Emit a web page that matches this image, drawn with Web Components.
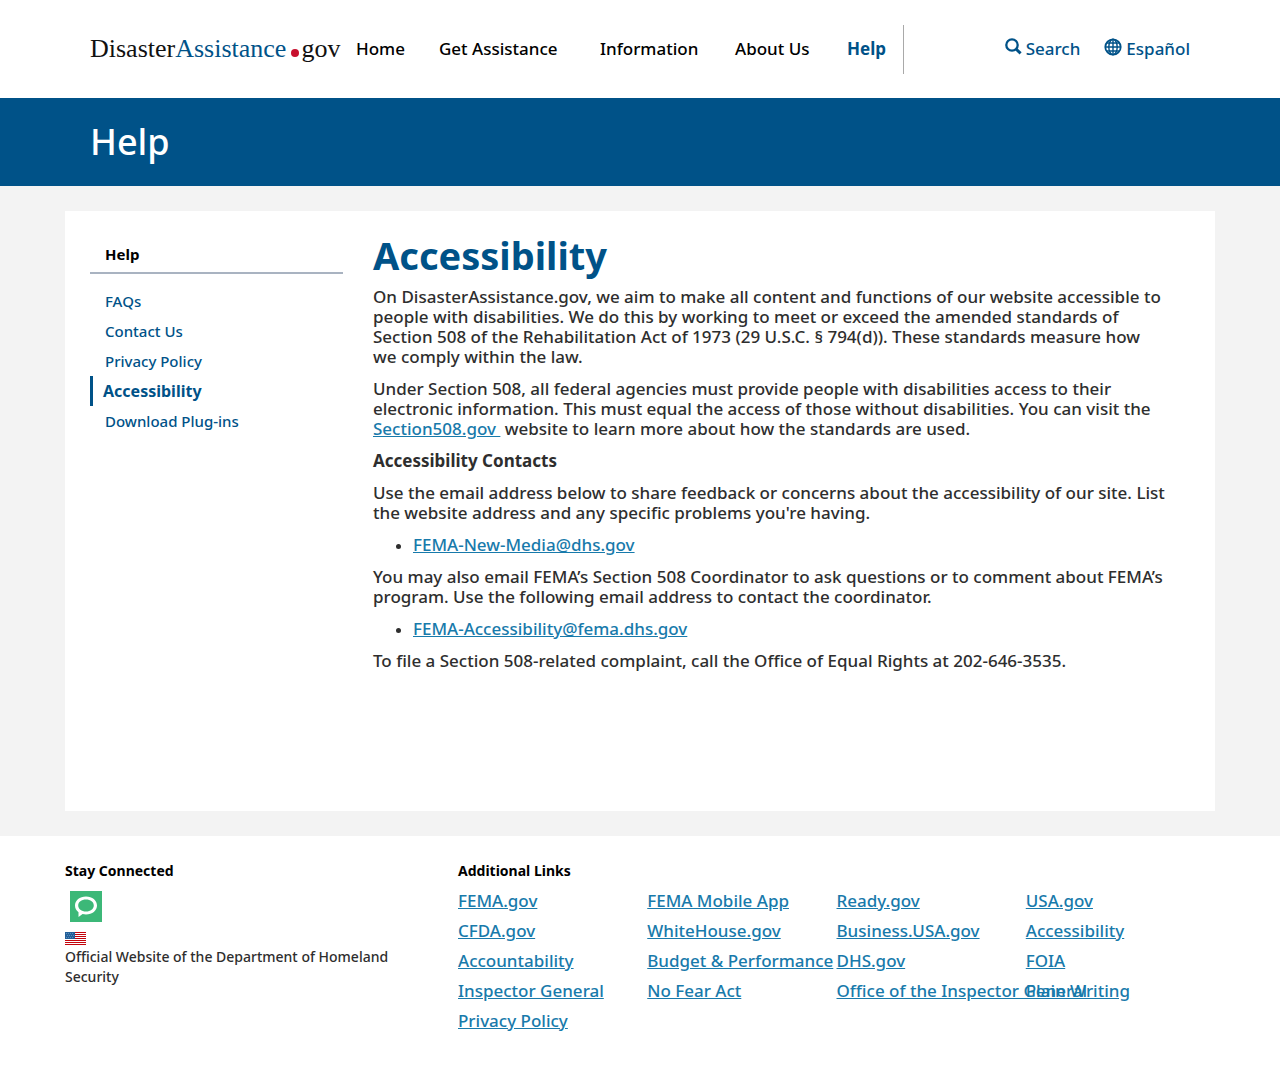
<!DOCTYPE html>
<html lang="en">
<head>
<meta charset="utf-8">
<meta name="viewport" content="width=device-width, initial-scale=1">
<title>Accessibility | DisasterAssistance.gov</title>
<style>
body { margin: 0; background: #fff; color: #2e2e2e; font: 500 17px/20px "Noto Sans", "Open Sans", sans-serif;
  --navy: #005288; --link: #187aab; }
p { margin: 0 0 12px; }
ul { margin: 0 0 12px; padding-left: 40px; }
li::marker { font-size: 15px; }
main a { color: var(--link); }
h1 { margin: 0 0 13px; font-size: 38px; line-height: 38px; color: var(--navy); }
h2 { margin: 0 0 12px; font-size: 17px; line-height: 20px; }
</style>
</head>
<body>
<da-header></da-header>
<da-banner>Help</da-banner>
<da-page>
  <da-sidenav slot="side"></da-sidenav>
  <main>
    <h1>Accessibility</h1>
    <p>On DisasterAssistance.gov, we aim to make all content and functions of our website accessible to people with disabilities. We do this by working to meet or exceed the amended standards of Section&nbsp;508 of the Rehabilitation Act of 1973 (29 U.S.C. § 794(d)). These standards measure how we&nbsp;comply within the law.</p>
    <p>Under Section 508, all federal agencies must provide people with disabilities access to their electronic information. This must equal the access of those without disabilities. You can visit the <a href="#section508">Section508.gov&nbsp;</a> website to learn more about how the standards are used.</p>
    <h2>Accessibility Contacts</h2>
    <p>Use the email address below to share feedback or concerns about the accessibility of our site. List the website address and any specific problems you're having.</p>
    <ul><li><a href="mailto:FEMA-New-Media@dhs.gov">FEMA-New-Media@dhs.gov</a></li></ul>
    <p>You may also email FEMA’s Section 508 Coordinator to ask questions or to comment about FEMA’s program. Use the following email address to contact the coordinator.</p>
    <ul><li><a href="mailto:FEMA-Accessibility@fema.dhs.gov">FEMA-Accessibility@fema.dhs.gov</a></li></ul>
    <p>To file a Section 508-related complaint, call the Office of Equal Rights at 202-646-3535.</p>
  </main>
</da-page>
<da-footer></da-footer>
<script>
const define = (name, html) => customElements.define(name, class extends HTMLElement {
  constructor() {
    super();
    const t = document.createElement('template');
    t.innerHTML = html;
    this.attachShadow({ mode: 'open' }).append(t.content.cloneNode(true));
  }
});

define('da-logo', `
<style>
:host { display: block; }
a { display: flex; align-items: baseline; color: #111; text-decoration: none; white-space: nowrap;
  font: 26px/32px "Liberation Serif", serif; }
b { font-weight: normal; color: var(--navy); }
i { width: 8px; height: 8px; border-radius: 50%; background: #c8102e; margin: 0 2px 0 5px; }
</style>
<a href="#home" aria-label="DisasterAssistance.gov">Disaster<b>Assistance</b><i></i>gov</a>`);

define('da-icon-link', `
<style>
:host { display: block; }
a { display: flex; gap: 4px; align-items: center; color: var(--navy); text-decoration: none; }
::slotted(svg) { display: block; margin-bottom: 4px; }
</style>
<a href="#utility"><slot name="icon"></slot><slot></slot></a>`);

define('da-header', `
<style>
:host { display: block; }
.bar { box-sizing: border-box; max-width: 1150px; height: 98px; margin: 0 auto; padding: 0 25px;
  display: flex; align-items: center; }
da-logo { flex: 0 0 266px; }
nav { box-sizing: border-box; height: 49px; border-right: 1px solid #a9a9a9; align-content: center;
  display: grid; grid-template-columns: 83px 161px 135px 112px 56px; }
nav a { color: #000; text-decoration: none; white-space: nowrap; line-height: 24px; }
nav a[aria-current] { color: var(--navy); font-weight: bold; }
.tools { margin-left: auto; display: flex; gap: 24px; }
</style>
<header class="bar">
  <da-logo></da-logo>
  <nav aria-label="Main"><a href="#home">Home</a><a href="#get">Get Assistance</a><a href="#info">Information</a><a href="#about">About Us</a><a href="#help" aria-current="page">Help</a></nav>
  <div class="tools">
    <da-icon-link><svg slot="icon" width="17" height="17" viewBox="0 0 17 17" fill="none" stroke="#005288"><circle cx="7" cy="7" r="5.7" stroke-width="2.3"/><path d="M11 11l4.6 4.4" stroke-width="3"/></svg>Search</da-icon-link>
    <da-icon-link><svg slot="icon" width="18" height="18" viewBox="0 0 18 18" fill="none" stroke="#005288" stroke-width="1.4"><circle cx="9" cy="9" r="7.7" stroke-width="1.8"/><ellipse cx="9" cy="9" rx="4.2" ry="7.7"/><path d="M9 1v16M1 9h16M2.5 5h13M2.5 13h13"/></svg>Español</da-icon-link>
  </div>
</header>`);

define('da-banner', `
<style>
:host { display: block; background: var(--navy); color: #fff; }
div { box-sizing: border-box; max-width: 1150px; margin: 0 auto; padding: 20px 25px;
  font-size: 36px; line-height: 48px; font-weight: 500; }
</style>
<div><slot></slot></div>`);

define('da-page', `
<style>
:host { display: block; background: #f3f3f3; padding: 25px; }
.card { box-sizing: border-box; max-width: 1150px; min-height: 600px; margin: 0 auto; padding: 25px;
  background: #fff; display: grid; grid-template-columns: 253px minmax(0, 1fr); gap: 30px; }
</style>
<div class="card"><slot name="side"></slot><slot></slot></div>`);

define('da-sidenav', `
<style>
:host { display: block; font-size: 15px; }
h2 { margin: 0 0 12px; padding: 8px 15px; border-bottom: 2px solid #a9b3c1; color: #000; font-size: 15px; line-height: 20px; }
a { display: block; padding: 0 15px; line-height: 30px; color: var(--navy); text-decoration: none; }
a[aria-current] { padding-left: 10px; border-left: 3px solid; font-size: 16px; font-weight: bold; }
</style>
<nav aria-label="Help"><h2>Help</h2><a href="#faq">FAQs</a><a href="#contact">Contact Us</a><a href="#privacy">Privacy Policy</a><a href="#accessibility" aria-current="page">Accessibility</a><a href="#plugins">Download Plug-ins</a></nav>`);

define('da-flag', `
<style>:host, svg { display: block; }</style>
<svg width="21" height="13" viewBox="0 0 21 13" role="img" aria-label="United States flag"><path fill="#fff" d="M0 0h21v13H0z"/><path stroke="#c4040c" d="M0 .5h21M0 2.5h21M0 4.5h21M0 6.5h21M0 8.5h21M0 10.5h21M0 12.5h21"/><path fill="#24609a" d="M0 0h10v7H0z"/><path stroke="#86adcd" stroke-width=".6" stroke-dasharray="1 1" d="M1 1.5h8M2 3.5h7M1 5.5h8"/></svg>`);

define('da-footer', `
<style>
:host { display: block; }
footer { box-sizing: border-box; max-width: 1150px; margin: 0 auto; padding: 25px 0 30px;
  display: grid; grid-template-columns: 363px minmax(0, 1fr); gap: 30px; }
h2 { margin: 0; font-size: 14px; line-height: 20px; color: #000; }
.social { display: block; width: 32px; margin: 10px 5px; }
.social svg { display: block; }
p { margin: 2px 0 0; font-size: 14px; line-height: 20px; }
ul { list-style: none; margin: 5px 0 0; padding: 0; display: grid; grid-template-columns: repeat(4, minmax(0, 1fr)); }
li { line-height: 30px; white-space: nowrap; min-width: 0; }
li a { color: var(--link); }
</style>
<footer>
  <section><h2>Stay Connected</h2>
    <a class="social" href="#blog" aria-label="Blog"><svg width="32" height="31" viewBox="0 0 32 31"><path fill="#3cb878" d="M0 0h32v31H0z"/><path fill="#fff" fill-rule="evenodd" d="M16 5.500c6.300 0 11 3.900 11 9s-4.700 9-11 9c-1.200 0-2.400-.1-3.400-.4L8.500 26v-4.800c-2.300-1.600-3.500-4-3.500-6.700 0-5.100 4.700-9 11-9zm0 3c-4.500 0-7.800 2.500-7.800 5.900s3.300 6 7.800 6 7.800-2.600 7.800-6-3.300-5.900-7.800-5.900z"/></svg></a>
    <da-flag></da-flag>
    <p>Official Website of the Department of Homeland Security</p>
  </section>
  <section><h2>Additional Links</h2><ul>
    <li><a href="#1">FEMA.gov</a></li><li><a href="#2">FEMA Mobile App</a></li><li><a href="#3">Ready.gov</a></li><li><a href="#4">USA.gov</a></li>
    <li><a href="#5">CFDA.gov</a></li><li><a href="#6">WhiteHouse.gov</a></li><li><a href="#7">Business.USA.gov</a></li><li><a href="#8">Accessibility</a></li>
    <li><a href="#9">Accountability</a></li><li><a href="#10">Budget &amp; Performance</a></li><li><a href="#11">DHS.gov</a></li><li><a href="#12">FOIA</a></li>
    <li><a href="#13">Inspector General</a></li><li><a href="#14">No Fear Act</a></li><li><a href="#15">Office of the Inspector General</a></li><li><a href="#16">Plain Writing</a></li>
    <li><a href="#17">Privacy Policy</a></li>
  </ul></section>
</footer>`);
</script>
</body>
</html>
